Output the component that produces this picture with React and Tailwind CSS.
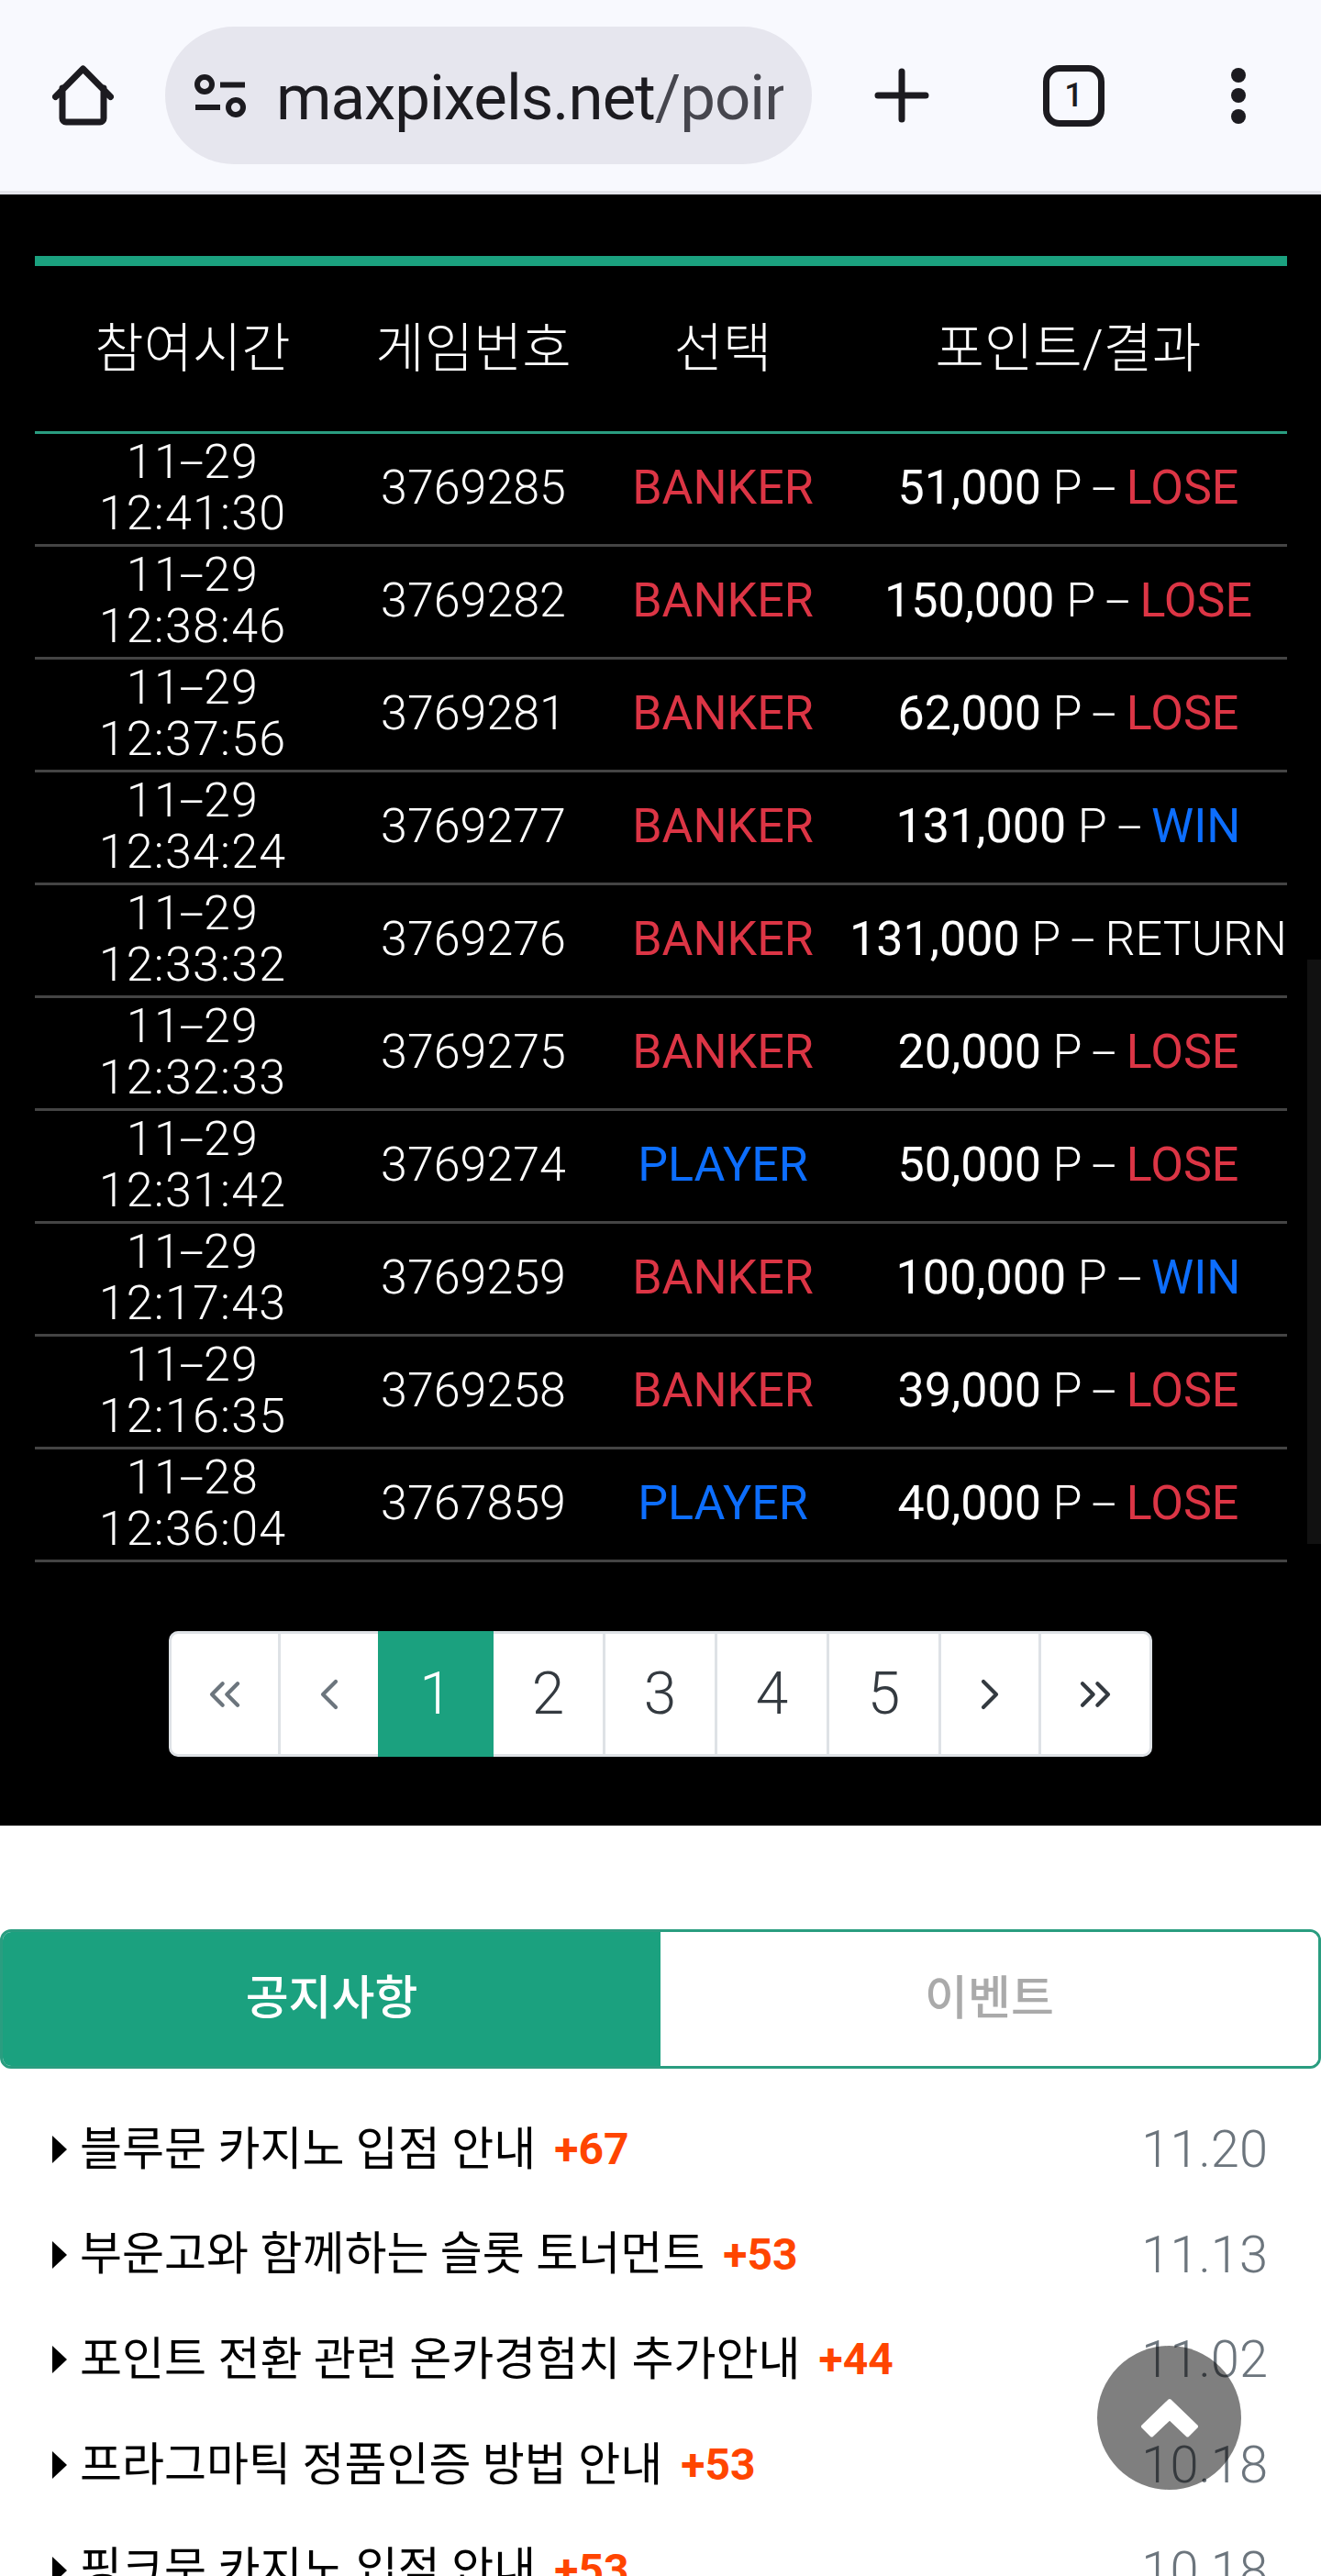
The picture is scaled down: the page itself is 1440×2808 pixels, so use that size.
import React from 'react';
import { ChevronsLeft, ChevronLeft, ChevronRight, ChevronsRight } from 'lucide-react';

const rows = [
  ['11', '29', '12:41:30', '3769285', 'BANKER', '51,000', 'LOSE'],
  ['11', '29', '12:38:46', '3769282', 'BANKER', '150,000', 'LOSE'],
  ['11', '29', '12:37:56', '3769281', 'BANKER', '62,000', 'LOSE'],
  ['11', '29', '12:34:24', '3769277', 'BANKER', '131,000', 'WIN'],
  ['11', '29', '12:33:32', '3769276', 'BANKER', '131,000', 'RETURN'],
  ['11', '29', '12:32:33', '3769275', 'BANKER', '20,000', 'LOSE'],
  ['11', '29', '12:31:42', '3769274', 'PLAYER', '50,000', 'LOSE'],
  ['11', '29', '12:17:43', '3769259', 'BANKER', '100,000', 'WIN'],
  ['11', '29', '12:16:35', '3769258', 'BANKER', '39,000', 'LOSE'],
  ['11', '28', '12:36:04', '3767859', 'PLAYER', '40,000', 'LOSE'],
];

const notices = [
  ['블루문 카지노 입점 안내', '+67', '11.20'],
  ['부운고와 함께하는 슬롯 토너먼트', '+53', '11.13'],
  ['포인트 전환 관련 온카경험치 추가안내', '+44', '11.02'],
  ['프라그마틱 정품인증 방법 안내', '+53', '10.18'],
  ['핑크문 카지노 입점 안내', '+53', '10.18'],
];

const resultStyle = { LOSE: 'font-normal text-[#dc3545]', WIN: 'font-normal text-[#0d6efd]', RETURN: 'font-light text-white' };
const gridCols = 'grid grid-cols-[344px_268px_276px_477px]';

// the dash in the reference is about twice as wide as the font's hyphen
function Dash() {
  return <span className="inline-block scale-x-[1.9] px-[4px]">-</span>;
}

function Toolbar() {
  return (
    <div className="h-[212px] bg-[#f8f9fe] border-b-4 border-[#e4e4ea] flex items-center text-[#1c1b20] font-['Roboto',sans-serif]">
      <svg className="ml-[57px] w-[67px] h-[66px] shrink-0" viewBox="0 0 67 66" fill="none" stroke="#1c1b20" strokeWidth="7" strokeLinecap="round" strokeLinejoin="round">
        <path d="M3.5 34.5L33.5 4l30 30.5M11 25v33a4 4 0 0 0 4 4h37a4 4 0 0 0 4-4V25" />
      </svg>
      <div className="ml-[56px] w-[705px] h-[150px] shrink-0 rounded-full bg-[#e6e6ee] flex items-center pl-[32px]">
        <svg className="w-[56px] h-[47px] shrink-0" viewBox="0 0 56 47" fill="none" stroke="#1c1b20" strokeWidth="6">
          <circle cx="11" cy="11" r="8" />
          <path d="M28 11.500h27M1 36h27" />
          <circle cx="45" cy="36" r="8" />
        </svg>
        <span className="ml-[33px] mt-[5px] w-[553px] text-[69px] leading-[90px] tracking-[-1px] overflow-hidden whitespace-nowrap">
          maxpixels.net<span className="text-[#46464e]">/point</span>
        </span>
      </div>
      <svg className="ml-[68px] w-[60px] h-[60px] shrink-0" viewBox="0 0 60 60" stroke="#1c1b20" strokeWidth="7" strokeLinecap="round">
        <path d="M30 4v52M4 30h52" />
      </svg>
      <div className="ml-[124px] w-[67px] h-[67px] shrink-0 rounded-[18px] border-[7px] border-[#1c1b20] flex items-center justify-center text-[36px] font-medium leading-none">1</div>
      <div className="ml-[138px] flex flex-col gap-[6.500px]">
        <span className="w-[16px] h-[16px] rounded-full bg-[#1c1b20]"></span>
        <span className="w-[16px] h-[16px] rounded-full bg-[#1c1b20]"></span>
        <span className="w-[16px] h-[16px] rounded-full bg-[#1c1b20]"></span>
      </div>
    </div>
  );
}

function HistoryTable() {
  return (
    <div className="relative bg-black pt-[67px] px-[38px] pb-[75px]">
      <div className="w-[1365px]">
        <div className="h-[11px] bg-[#1ba17f]"></div>
        <div className={`${gridCols} h-[183px] items-center text-center text-white text-[58px] font-light border-b-[3px] border-[#2a9d80]`}>
          <div>참여시간</div>
          <div>게임번호</div>
          <div>선택</div>
          <div>포인트/결과</div>
        </div>
        {rows.map((r) => (
          <div key={r[2]} className={`${gridCols} h-[123px] pb-[2px] items-center text-center text-white text-[52px] leading-[56px] font-light border-b-[3px] border-[#444444]`}>
            <div className="tracking-[1.2px]">{r[0]}<Dash />{r[1]}<br />{r[2]}</div>
            <div>{r[3]}</div>
            <div className={`font-normal ${r[4] === 'BANKER' ? 'text-[#dc3545]' : 'text-[#0d6efd]'}`}>{r[4]}</div>
            <div className="whitespace-nowrap">
              <span className="font-normal">{r[5]}</span> P <Dash /> <span className={resultStyle[r[6]]}>{r[6]}</span>
            </div>
          </div>
        ))}
      </div>
      <div className="mt-[75px] ml-[146px] w-[1072px] h-[137px] flex bg-white border-[3px] border-[#dee2e6] rounded-[10px] text-[64px] font-light text-[#343a40]">
        <div className="w-[119px] flex items-center justify-center border-r-[3px] border-[#dee2e6] text-[#6c757d]"><ChevronsLeft className="w-[56px] h-[56px]" strokeWidth={1.800} /></div>
        <div className="w-[106px] flex items-center justify-center text-[#6c757d]"><ChevronLeft className="w-[56px] h-[56px]" strokeWidth={1.800} /></div>
        <div className="w-[126px] -my-[3px] flex items-center justify-center bg-[#1ba17f] text-white">1</div>
        {['2', '3', '4', '5'].map((n) => (
          <div key={n} className="w-[122px] flex items-center justify-center border-r-[3px] border-[#dee2e6]">{n}</div>
        ))}
        <div className="w-[109px] flex items-center justify-center border-r-[3px] border-[#dee2e6]"><ChevronRight className="w-[56px] h-[56px]" strokeWidth={1.800} /></div>
        <div className="flex-1 flex items-center justify-center"><ChevronsRight className="w-[56px] h-[56px]" strokeWidth={1.800} /></div>
      </div>
      <div className="absolute right-0 top-[834px] w-[15px] h-[637px] bg-[#111111]"></div>
    </div>
  );
}

function NoticeBoard() {
  return (
    <div className="h-[818px] overflow-hidden bg-white">
      <div className="h-[113px]"></div>
      <div className="h-[152px] flex rounded-[12px] overflow-hidden border-[3px] border-[#2a9d80] text-[51px] font-medium">
        <div className="w-[717px] bg-[#1ba17f] text-white flex items-center justify-center">공지사항</div>
        <div className="flex-1 bg-white text-[#aaaaaa] flex items-center justify-center">이벤트</div>
      </div>
      <div className="pt-[31px] pl-[57px] pr-[58px]">
        {notices.map((n, i) => (
          <div key={i} className="h-[114.600px] flex items-center text-[50px] text-black">
            <span className="w-0 h-0 border-y-[15px] border-y-transparent border-l-[16px] border-l-black mr-[14px]"></span>
            <span className="whitespace-nowrap font-normal">{n[0]}</span>
            <span className="ml-[20px] text-[48px] font-bold text-[#ff4500] whitespace-nowrap">{n[1]}</span>
            <span className="ml-auto text-[#6c757d] text-[56px] font-light">{n[2]}</span>
          </div>
        ))}
      </div>
    </div>
  );
}

export default function App() {
  return (
    <div className="relative w-[1440px] h-[2808px] overflow-hidden bg-white font-['Roboto','Noto_Sans_CJK_KR',sans-serif]">
      <Toolbar />
      <HistoryTable />
      <NoticeBoard />
      {/* scroll to top */}
      <button className="absolute left-[1196px] top-[2557px] w-[157px] h-[157px] rounded-full bg-black/50 flex items-center justify-center">
        <svg className="w-[64px] h-[43px]" viewBox="0 0 64 43" fill="white" stroke="white" strokeWidth="4" strokeLinejoin="round">
          <path d="M32 3l29 28-9.500 9.500L32 22 12.500 40.500 3 31z" />
        </svg>
      </button>
    </div>
  );
}
